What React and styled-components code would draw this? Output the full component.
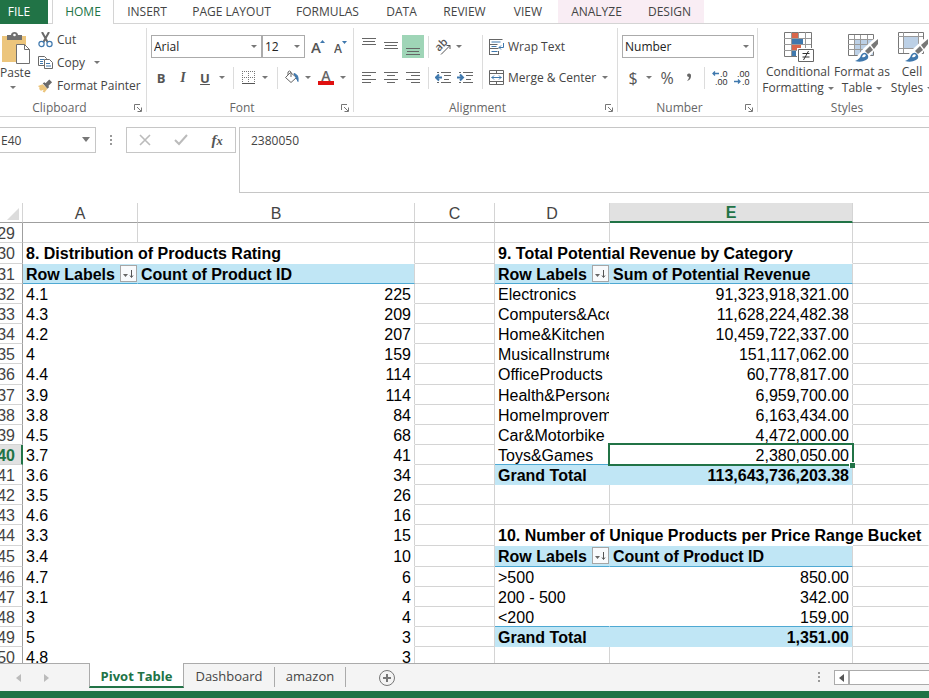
import React from "react";
import styled, { createGlobalStyle, css } from "styled-components";

const GREEN = "#217346";
const LINE = "#d4d4d4";
const BLUE = "#3f78ad";
const GREY = "#666666";
const UI = '"Open Sans", "Noto Sans", sans-serif';
const SHEET = '"Liberation Sans", Arial, sans-serif';

const Global = createGlobalStyle`
  *, *::before, *::after { box-sizing: border-box; }
  body { margin: 0; background: #fff; color: #444; font: 12px/16px ${UI}; overflow: hidden; }
  button, input, select, textarea { font: inherit; color: inherit; margin: 0; border-radius: 0; }
  button { padding: 0; border: 0; background: none; white-space: nowrap; }
  svg { display: block; flex: none; }
`;

const Page = styled.div`
  display: flex;
  flex-direction: column;
  height: 100vh;
  overflow: hidden;
`;

/* Ribbon tabs */
const TabBar = styled.nav`
  display: flex;
  height: 24px;
  flex: none;
  &::after { content: ""; flex: 1; border-bottom: 1px solid ${LINE}; }
`;
const FileTab = styled.button`
  width: 48px;
  padding: 0 10px 0 0;
  background: ${GREEN};
  color: #fff;
`;
const TabGap = styled.span`
  width: 4px;
  border-bottom: 1px solid ${LINE};
`;
const Tab = styled.button`
  flex: none;
  width: ${(p) => p.$w}px;
  border-bottom: 1px solid ${LINE};
  background: ${(p) => (p.$context ? "#f9edf4" : "#fff")};
  ${(p) => p.$active && css`
    color: ${GREEN};
    border: solid ${LINE};
    border-width: 0 1px;
  `}
`;

/* Ribbon */
const RibbonBar = styled.div`
  display: flex;
  flex: none;
  height: 93px;
  padding: 4px 0;
  border-bottom: 1px solid ${LINE};
  overflow: hidden;
`;
const Group = styled.section`
  display: flex;
  flex-direction: column;
  flex: none;
  width: ${(p) => p.$w}px;
  border-right: 1px solid #dcdcdc;
  &:first-child { margin-left: -11px; }
`;
const GroupBody = styled.div`
  display: flex;
  flex: none;
  height: 72px;
  padding: ${(p) => p.$pad};
`;
const GroupFoot = styled.footer`
  display: grid;
  grid-template-columns: 1fr 16px;
  align-items: center;
  flex: none;
  height: 16px;
  margin-bottom: -4px;
  text-align: center;
  color: #666;
`;
const LauncherButton = styled.button`
  display: flex;
  justify-content: center;
`;
const Stack = styled.div`
  display: flex;
  flex-direction: column;
  gap: ${(p) => p.$gap ?? 8}px;
  flex: ${(p) => (p.$grow ? 1 : "none")};
`;
const Row = styled.div`
  display: flex;
  align-items: center;
  height: 23px;
`;
const FontPickers = styled(Row)`padding-left: 1px;`;
const IconButton = styled.button`
  display: flex;
  align-items: center;
  justify-content: center;
  flex: none;
  width: ${(p) => p.$w || 22}px;
  height: 23px;
  background: ${(p) => (p.$on ? "#9fd5b7" : "transparent")};
`;
const LabelButton = styled.button`
  display: flex;
  align-items: center;
  gap: 4px;
  height: 23px;
`;
const PasteButton = styled.button`
  display: flex;
  flex-direction: column;
  align-items: flex-start;
  justify-content: flex-start;
  width: 38px;
  padding-top: 3px;
  & > span { padding-top: 1px; }
  & > svg:last-child { margin: 5px 0 0 10px; }
`;
const StyleButton = styled.button`
  display: flex;
  flex-direction: column;
  align-items: center;
  flex: none;
  width: ${(p) => p.$w}px;
  & > svg { margin-bottom: 2px; }
`;
const StyleLine = styled.span`
  display: flex;
  align-items: center;
  gap: 4px;
`;
const Divider = styled.span`
  display: flex;
  justify-content: center;
  flex: none;
  width: ${(p) => p.$w || 10}px;
  height: ${(p) => p.$h || 22}px;
  &::before { content: ""; width: 1px; background: #dcdcdc; }
`;
const Pick = styled.label`
  position: relative;
  flex: ${(p) => (p.$w ? "none" : 1)};
  width: ${(p) => (p.$w ? p.$w + "px" : "auto")};
  height: 23px;
  & > select {
    appearance: none;
    width: 100%;
    height: 100%;
    padding: 0 14px 0 2px;
    border: 1px solid #ababab;
    background: #fff;
    color: #222;
  }
  & > svg { position: absolute; right: 5px; top: 10px; pointer-events: none; }
`;
const Glyph = styled.span`
  font: ${(p) => p.$font || `bold 13px/16px ${UI}`};
  color: #555;
  text-decoration: ${(p) => (p.$under ? "underline" : "none")};
`;

/* Formula bar */
const FormulaBar = styled.div`
  display: flex;
  align-items: flex-start;
  flex: none;
  height: 86px;
  padding-top: 10px;
`;
const NameBox = styled.label`
  position: relative;
  width: 96px;
  height: 26px;
  & > input {
    width: 100%;
    height: 100%;
    padding: 0 20px 0 1px;
    border: 1px solid #c6c6c6;
    border-left: 0;
  }
  & > svg { position: absolute; right: 6px; top: 10px; }
`;
const Dots = styled.span`
  display: flex;
  align-items: center;
  justify-content: center;
  width: 30px;
  height: 26px;
`;
const EntryTools = styled.div`
  display: flex;
  justify-content: space-around;
  align-items: center;
  width: 110px;
  height: 26px;
  margin-right: 3px;
  border: 1px solid #c6c6c6;
`;
const FormulaInput = styled.textarea`
  flex: 1;
  height: 66px;
  padding: 5px 11px;
  border: 1px solid #c6c6c6;
  border-right: 0;
  resize: none;
`;

/* Sheet */
const SheetArea = styled.main`
  flex: 1;
  min-height: 0;
  overflow: hidden;
`;
const Grid = styled.table`
  width: 100%;
  table-layout: fixed;
  border-collapse: separate;
  border-spacing: 0;
  font: 16px/16px ${SHEET};
  color: #000;
`;
const Col = styled.col`width: ${(p) => (p.$w ? p.$w + "px" : "auto")};`;
const ColHead = styled.th`
  height: 20px;
  padding: 2px 0 0;
  font-weight: ${(p) => (p.$on ? "bold" : "normal")};
  color: ${(p) => (p.$on ? GREEN : "#444")};
  background: ${(p) => (p.$on ? "#e1e1e1" : "#fff")};
  border-right: 1px solid ${LINE};
  border-bottom: ${(p) => (p.$on ? `2px solid ${GREEN}` : "1px solid #9f9f9f")};
  &:last-child { border-right: 0; }
  & > svg { margin-left: 7px; }
`;
const RowHead = styled.th`
  height: ${(p) => p.$h}px;
  padding: 3px 0 0;
  overflow: hidden;
  vertical-align: top;
  font-weight: ${(p) => (p.$on ? "bold" : "normal")};
  color: ${(p) => (p.$on ? GREEN : "#444")};
  background: ${(p) => (p.$on ? "#e1e1e1" : "#fff")};
  border-right: ${(p) => (p.$on ? `2px solid ${GREEN}` : "1px solid #9f9f9f")};
  border-bottom: 1px solid ${LINE};
`;
const RowNumber = styled.span`
  display: flex;
  justify-content: flex-end;
  padding-right: ${(p) => (p.$on ? 6 : 7)}px;
`;
const Cell = styled.td`
  padding: 3px 3px 0;
  vertical-align: top;
  white-space: nowrap;
  text-align: ${(p) => (p.$right ? "right" : "left")};
  overflow: ${(p) => (p.$clip ? "hidden" : "visible")};
  font-weight: ${(p) => (p.$bold ? "bold" : "normal")};
  background: ${(p) => (p.$fill ? "#c0e6f5" : "transparent")};
  border-right: 1px solid ${(p) => p.$v || "transparent"};
  border-bottom: 1px solid ${(p) => p.$b || "transparent"};
  ${(p) => p.$selected && css`
    position: relative;
    &::before {
      content: "";
      position: absolute;
      inset: -2px;
      border: 2px solid ${GREEN};
    }
    &::after {
      content: "";
      position: absolute;
      right: -3px;
      bottom: -4px;
      width: 6px;
      height: 6px;
      background: ${GREEN};
      border: solid #fff;
      border-width: 1px 0 0 1px;
    }
  `}
`;
const HeadCell = styled.div`
  display: flex;
  align-items: center;
  justify-content: space-between;
  height: 16px;
`;
const FilterButton = styled.button`
  display: flex;
  align-items: center;
  justify-content: center;
  width: 17px;
  height: 17px;
  margin: -3px -3px 0 0;
  border: 1px solid #a6a6a6;
  background: #f8fafc;
`;

/* Bottom bars */
const SheetTabs = styled.nav`
  display: flex;
  flex: none;
  height: 28px;
  background: #f4f4f4;
  border-top: 1px solid #ababab;
`;
const TabScroll = styled.div`
  display: flex;
  align-items: center;
  width: 89px;
  padding-left: 7px;
  gap: 6px;
`;
const SheetTab = styled.button`
  width: ${(p) => p.$w}px;
  height: 20px;
  margin-top: 3px;
  padding-bottom: 2px;
  font-size: 13px;
  border-right: 1px solid #ababab;
  ${(p) => p.$active && css`
    height: 25px;
    margin-top: -1px;
    padding: 3px 0 0;
    background: #fff;
    color: ${GREEN};
    font-weight: bold;
    border: solid #ababab;
    border-width: 0 1px;
    border-bottom: 2px solid ${GREEN};
  `}
`;
const AddSheet = styled.button`
  width: 20px;
  margin: 0 auto 0 32px;
`;
const ScrollBar = styled.div`
  display: flex;
  width: 95px;
  height: 15px;
  margin-top: 6px;
  border: 1px solid #ababab;
  border-right: 0;
  background: #fff;
`;
const ScrollArrow = styled.button`
  display: flex;
  align-items: center;
  justify-content: center;
  width: 15px;
  border-right: 2px solid #ababab;
`;
const Status = styled.footer`
  flex: none;
  height: 7px;
  background: ${GREEN};
`;

/* Icons */
const Caret = ({ s = 6, c = "#777" }) => (
  <svg width={s} height={s === 6 ? 3 : 5} viewBox="0 0 6 3" preserveAspectRatio="none"><path d="M0 0h6L3 3z" fill={c} /></svg>
);
const DropCaret = ({ w = 12, label }) => <IconButton $w={w} aria-label={label}><Caret /></IconButton>;
const Launcher = () => (
  <svg width="8" height="8" viewBox="0 0 8 8" fill="none" stroke="#777"><path d="M.5 6V.5H6M3 3l4 4M7.500 3.500v4h-4" /></svg>
);
const PasteIcon = () => (
  <svg width="31" height="33" viewBox="0 0 31 33">
    <path d="M2 5h24v26H2z" fill="#ecc57c" />
    <path d="M7 4h4c0-4 7-4 7 0h4v5H7z" fill="#6f6f6f" />
    <circle cx="14.500" cy="4" r="1.300" fill="#fff" />
    <path d="M16.500 13.500h8l5 5v14h-13z" fill="#fff" stroke="#6f6f6f" />
    <path d="M24.500 13.500v5h5" fill="none" stroke="#6f6f6f" />
  </svg>
);
const CutIcon = () => (
  <svg width="15" height="16" viewBox="0 0 15 16" fill="none">
    <path d="M4 0l5.500 10M11 0L5.500 10" stroke="#6a6a6a" strokeWidth="2" />
    <circle cx="3.500" cy="12" r="2.600" stroke={BLUE} strokeWidth="1.200" />
    <circle cx="11.500" cy="12" r="2.600" stroke={BLUE} strokeWidth="1.200" />
  </svg>
);
const CopyIcon = () => (
  <svg width="15" height="15" viewBox="0 0 15 15" fill="#fff" stroke="#6a6a6a">
    <path d="M.5 1.500h6l2 2v7h-8z" />
    <path d="M2 4.500h4M2 6.500h3M2 8.500h3" stroke={BLUE} />
    <path d="M6.500 4.500h5l3 3v6h-8z" />
    <path d="M8 8.500h4M8 11h5" stroke={BLUE} />
  </svg>
);
const PainterIcon = () => (
  <svg width="15" height="14" viewBox="0 0 16 14">
    <path d="M0 7l5-2 5 5-3 4-2-1 1-2-3 1-2-2 1-1z" fill="#ecc57c" />
    <path d="M5 4l2-1 5 5-2 2zM8 4l4-4 3 3-4 4z" fill="#6a6a6a" />
  </svg>
);
const BorderIcon = () => (
  <svg width="13" height="13" viewBox="0 0 13 13" fill="none" stroke="#777" strokeDasharray="1 1">
    <path d="M0 .5h13M0 6.500h13M.5 0v13M6.500 0v13M12.500 0v13" />
    <path d="M0 12.500h13" strokeDasharray="none" stroke="#555" />
  </svg>
);
const BucketIcon = () => (
  <svg width="16" height="15" viewBox="0 0 16 15" fill="none" stroke="#666">
    <path d="M1.500 7.500l5-5 6 5-5.500 5z" />
    <path d="M4 5V2q1.500-2 3 0v5" />
    <path d="M10 3.500q5 1 4 8l-2-4z" fill={BLUE} stroke={BLUE} />
  </svg>
);
const FontColorIcon = () => (
  <svg width="16" height="15" viewBox="0 0 16 15">
    <text x="8" y="11" textAnchor="middle" fontFamily="Open Sans, sans-serif" fontWeight="600" fontSize="14" fill="#666">A</text>
    <path d="M0 11h16v4H0z" fill="#e01010" />
  </svg>
);
const SizeIcon = ({ down }) => (
  <svg width="14" height="16" viewBox="0 0 14 16" fontFamily="Open Sans, sans-serif" fontWeight="600" fill="#555">
    <text x="0" y="14" fontSize={down ? 12 : 15}>A</text>
    <path d={down ? "M8 2h5l-2.500 3z" : "M9 4h5l-2.500-3z"} fill={BLUE} />
  </svg>
);
const LinesIcon = ({ lines, h = 11 }) => (
  <svg width="14" height={h} viewBox={`0 0 14 ${h}`} stroke="#666">
    {lines.map(([x1, x2, y]) => <path key={y} d={`M${x1} ${y + 0.5}H${x2}`} />)}
  </svg>
);
const OrientIcon = () => (
  <svg width="18" height="18" viewBox="0 0 18 18" fill="none" stroke="#555">
    <text x="0" y="0" transform="translate(5 14) rotate(-45)" fontFamily="Open Sans, sans-serif" fontWeight="600" fontSize="11" fill="#555" stroke="none">ab</text>
    <path d="M7 16.500L16 7.500M16 7.500h-3.500M16 7.500v3.500" />
  </svg>
);
const IndentIcon = ({ flip }) => (
  <svg width="16" height="11" viewBox="0 0 16 11" fill="none" stroke="#666">
    <path d="M2 .5h2M6 .5h10M9 3.500h7M9 7.500h5M2 10.500h2M6 10.500h10" />
    <path d={flip ? "M0 5.500h6M3 2.500l3 3-3 3" : "M7 5.500H1M4 2.500l-3 3 3 3"} stroke={BLUE} strokeWidth="2" />
  </svg>
);
const WrapIcon = () => (
  <svg width="15" height="16" viewBox="0 0 15 16" fill="none" stroke="#666">
    <path d="M.5.5h13M.5 5.500h8M.5 9.500h9M.5 15.500h9M.5 0v16M9.500 12v4" />
    <path d="M2.500 3h9M2.500 7.500h5M2.500 12.500h6M14.500 4v4.500H10M12 6.500l-2 2 2 2" stroke={BLUE} />
  </svg>
);
const MergeIcon = () => (
  <svg width="15" height="15" viewBox="0 0 15 15" fill="none" stroke="#666">
    <path d="M.5.5h14v14H.5zM.5 3.500h14M.5 11.500h14M7.500 0v3.500M7.500 11.500V15" />
    <path d="M2.500 7.500h10M5 5.500l-2 2 2 2M10 5.500l2 2-2 2" stroke={BLUE} />
  </svg>
);
const DecimalIcon = ({ less }) => (
  <svg width="16" height="16" viewBox="0 0 16 16" fontFamily="Liberation Sans, sans-serif" fontSize="9" fill="#333">
    <text x={less ? 3 : 8} y="7">{less ? ".00" : ".0"}</text>
    <text x={less ? 8 : 3} y="15">{less ? ".0" : ".00"}</text>
    <path d={less ? "M0 11.500h6M4 9.500l2 2-2 2" : "M7 3.500H1M3 1.500l-2 2 2 2"} fill="none" stroke={BLUE} strokeWidth="1.300" />
  </svg>
);
const ConditionalIcon = () => (
  <svg width="31" height="31" viewBox="0 0 31 31" fill="none">
    <path d="M1.500 1.500h27v24h-27z" fill="#fff" stroke="#777" />
    <path d="M1 7.500h27M1 13.500h27M1 19.500h27M8.500 1v24M15.500 1v24M22.500 1v24" stroke="#999" />
    <path d="M9 2h6v5H9zM9 14h9v5H9z" fill="#d9664a" />
    <path d="M9 8h11v5H9zM9 20h4v5H9z" fill={BLUE} />
    <path d="M14 17h17v14H14z" fill="#fff" />
    <path d="M15.500 18.500h15v12h-15z" fill="#fff" stroke="#666" />
    <path d="M19.500 22.500h7M19.500 26h7M25.500 20l-5 9" stroke="#333" />
  </svg>
);
const BrushIcon = ({ cell }) => (
  <svg width="31" height="31" viewBox="0 0 31 31" fill="none">
    <path d={cell ? "M1.500 1.500h25v21h-25z" : "M1.500 3.500h25v21h-25z"} fill="#fff" stroke="#777" />
    {cell
      ? <path d="M7 6h14v11H7z" fill="#bcd0e6" />
      : <path d="M8 9h18v15H8z" fill="#bcd0e6" />}
    <path d={cell ? "M1 5.500h25M1 17.500h25M6.500 1v21M21.500 1v21" : "M1 8.500h25M1 13.500h25M1 18.500h25M7.500 4v20M13.500 4v20M20.500 4v20"} stroke="#999" />
    <path d="M6 30L17 17 30 5v11L19 30z" fill="#fff" />
    <path d="M24 14l7-6v5l-4 5z" fill="#777" />
    <path d="M18 20l5-5 3 4-5 4z" fill="#777" />
    <path d="M8 30q5-2 6-6 3-4 6-1 3 4-1 6-5 3-11 1z" fill={BLUE} />
    <path d="M15 26q1-4 4-2-1 3-4 2" fill="#fff" />
  </svg>
);
const SortIcon = () => (
  <svg width="11" height="10" viewBox="0 0 11 10"><path d="M0 5h5L2.500 8z" fill="#666" /><path d="M8.500 1v7M7 6.500l1.500 2 1.500-2" fill="none" stroke="#555" /></svg>
);
const DotsIcon = () => (
  <svg width="2" height="12" viewBox="0 0 2 12" fill="#999"><path d="M0 1h2v2H0zM0 5h2v2H0zM0 9h2v2H0z" /></svg>
);
const ArrowIcon = ({ right, c = "#bbb" }) => (
  <svg width="5" height="8" viewBox="0 0 5 8"><path d={right ? "M0 0l5 4-5 4z" : "M5 0L0 4l5 4z"} fill={c} /></svg>
);

const vertical = (y) => [[0, 14, y], [1, 13, y + 3], [0, 14, y + 6]];
const horizontal = (x1, x2) => [[0, 14, 0], [x1, x2, 3], [0, 14, 7], [x1, x2, 10]];

const tabs = [
  ["HOME", 62, "active"], ["INSERT", 66], ["PAGE LAYOUT", 103], ["FORMULAS", 89], ["DATA", 59],
  ["REVIEW", 67], ["VIEW", 60], ["ANALYZE", 77, "context"], ["DESIGN", 69, "context"],
];

const RibbonGroup = ({ name, w, pad, launcher = true, children }) => (
  <Group $w={w} aria-label={name}>
    <GroupBody $pad={pad}>{children}</GroupBody>
    <GroupFoot>
      <span>{name}</span>
      {launcher && <LauncherButton aria-label={`${name} settings`}><Launcher /></LauncherButton>}
    </GroupFoot>
  </Group>
);

const Select = ({ label, value, w }) => (
  <Pick $w={w}>
    <select aria-label={label} defaultValue={value}><option>{value}</option></select>
    <Caret />
  </Pick>
);

function Ribbon() {
  return (
    <RibbonBar>
      <RibbonGroup name="Clipboard" w={158} pad="0 0 0 11px">
        <PasteButton><PasteIcon /><span>Paste</span><Caret /></PasteButton>
        <Stack $gap={0}>
          <LabelButton><CutIcon />Cut</LabelButton>
          <Row><LabelButton><CopyIcon />Copy</LabelButton><DropCaret w={24} label="Copy options" /></Row>
          <LabelButton><PainterIcon />Format Painter</LabelButton>
        </Stack>
      </RibbonGroup>
      <RibbonGroup name="Font" w={207} pad="7px 4px 0 3px">
        <Stack>
          <FontPickers>
            <Select label="Font family" value="Arial" w={111} />
            <Select label="Font size" value="12" w={43} />
            <IconButton $w={26} aria-label="Increase font size"><SizeIcon /></IconButton>
            <IconButton $w={20} aria-label="Decrease font size"><SizeIcon down /></IconButton>
          </FontPickers>
          <Row>
            <IconButton aria-label="Bold"><Glyph>B</Glyph></IconButton>
            <IconButton aria-label="Italic"><Glyph $font='italic bold 14px/16px "Liberation Serif", serif'>I</Glyph></IconButton>
            <IconButton aria-label="Underline"><Glyph $under>U</Glyph></IconButton>
            <DropCaret label="Underline options" />
            <Divider />
            <IconButton $w={20} aria-label="Borders"><BorderIcon /></IconButton>
            <DropCaret w={14} label="Border options" />
            <Divider />
            <IconButton $w={20} aria-label="Fill color"><BucketIcon /></IconButton>
            <DropCaret label="Fill options" />
            <IconButton $w={24} aria-label="Font color"><FontColorIcon /></IconButton>
            <DropCaret w={10} label="Font color options" />
          </Row>
        </Stack>
      </RibbonGroup>
      <RibbonGroup name="Alignment" w={264} pad="7px 4px 0 4px">
        <Stack>
          <Row>
            <IconButton aria-label="Top align"><LinesIcon lines={vertical(0)} h={17} /></IconButton>
            <IconButton aria-label="Middle align"><LinesIcon lines={vertical(4)} h={17} /></IconButton>
            <IconButton $on aria-label="Bottom align"><LinesIcon lines={vertical(10)} h={17} /></IconButton>
            <Divider $w={8} />
            <IconButton aria-label="Orientation"><OrientIcon /></IconButton>
            <DropCaret w={10} label="Orientation options" />
          </Row>
          <Row>
            <IconButton aria-label="Align left"><LinesIcon lines={horizontal(0, 9)} /></IconButton>
            <IconButton aria-label="Center"><LinesIcon lines={horizontal(3, 11)} /></IconButton>
            <IconButton aria-label="Align right"><LinesIcon lines={horizontal(5, 14)} /></IconButton>
            <Divider $w={8} />
            <IconButton aria-label="Decrease indent"><IndentIcon /></IconButton>
            <IconButton aria-label="Increase indent"><IndentIcon flip /></IconButton>
          </Row>
        </Stack>
        <Divider $w={13} $h={54} />
        <Stack $grow>
          <Row><LabelButton><WrapIcon />Wrap Text</LabelButton></Row>
          <Row><LabelButton><MergeIcon />Merge &amp; Center</LabelButton><DropCaret w={18} label="Merge options" /></Row>
        </Stack>
      </RibbonGroup>
      <RibbonGroup name="Number" w={140} pad="7px 3px 0 4px">
        <Stack $grow>
          <Row><Select label="Number format" value="Number" /></Row>
          <Row>
            <IconButton aria-label="Accounting"><Glyph $font={`16px/20px ${UI}`}>$</Glyph></IconButton>
            <DropCaret w={10} label="Accounting options" />
            <IconButton $w={26} aria-label="Percent"><Glyph $font={`16px/20px ${UI}`}>%</Glyph></IconButton>
            <IconButton $w={18} aria-label="Comma">
              <svg width="6" height="9" viewBox="0 0 6 9"><path d="M1 2a2 2 0 1 1 4 1q0 4-4 5 2-2 2-4-2 0-2-2" fill={GREY} /></svg>
            </IconButton>
            <Divider $w={12} />
            <IconButton $w={20} aria-label="Increase decimal"><DecimalIcon /></IconButton>
            <IconButton $w={24} aria-label="Decrease decimal"><DecimalIcon less /></IconButton>
          </Row>
        </Stack>
      </RibbonGroup>
      <RibbonGroup name="Styles" w={195} pad="3px 0 0 4px" launcher={false}>
        <StyleButton $w={72}><ConditionalIcon /><StyleLine>Conditional</StyleLine><StyleLine>Formatting <Caret /></StyleLine></StyleButton>
        <StyleButton $w={56}><BrushIcon /><StyleLine>Format as</StyleLine><StyleLine>Table <Caret /></StyleLine></StyleButton>
        <StyleButton $w={44}><BrushIcon cell /><StyleLine>Cell</StyleLine><StyleLine>Styles <Caret /></StyleLine></StyleButton>
      </RibbonGroup>
    </RibbonBar>
  );
}

const ratings = [
  ["4.1", 225], ["4.3", 209], ["4.2", 207], ["4", 159], ["4.4", 114], ["3.9", 114], ["3.8", 84],
  ["4.5", 68], ["3.7", 41], ["3.6", 34], ["3.5", 26], ["4.6", 16], ["3.3", 15], ["3.4", 10],
  ["4.7", 6], ["3.1", 4], ["3", 4], ["5", 3], ["4.8", 3],
];
const left = [
  { kind: "blank" },
  { kind: "title", v: ["8. Distribution of Products Rating"] },
  { kind: "head", v: ["Row Labels", "Count of Product ID"] },
  ...ratings.map((v) => ({ kind: "data", v })),
];
const right = [
  { kind: "blank" },
  { kind: "title", v: ["9. Total Potential Revenue by Category"] },
  { kind: "head", v: ["Row Labels", "Sum of Potential Revenue"] },
  ...[
    ["Electronics", "91,323,918,321.00"],
    ["Computers&Accessories", "11,628,224,482.38"],
    ["Home&Kitchen", "10,459,722,337.00"],
    ["MusicalInstruments", "151,117,062.00"],
    ["OfficeProducts", "60,778,817.00"],
    ["Health&PersonalCare", "6,959,700.00"],
    ["HomeImprovement", "6,163,434.00"],
    ["Car&Motorbike", "4,472,000.00"],
  ].map((v) => ({ kind: "data", v })),
  { kind: "data", v: ["Toys&Games", "2,380,050.00"], last: true, selected: true },
  { kind: "total", v: ["Grand Total", "113,643,736,203.38"] },
  { kind: "blank" },
  { kind: "blank" },
  { kind: "title", v: ["10. Number of Unique Products per Price Range Bucket"], wide: true },
  { kind: "head", v: ["Row Labels", "Count of Product ID"] },
  { kind: "data", v: [">500", "850.00"] },
  { kind: "data", v: ["200 - 500", "342.00"] },
  { kind: "data", v: ["<200", "159.00"], last: true },
  { kind: "total", v: ["Grand Total", "1,351.00"] },
  { kind: "blank" },
];
const tallRows = [30, 36, 44, 45];

function Pair({ kind, v = [], last, selected, wide }) {
  const head = kind === "head";
  const fill = head || kind === "total";
  const bold = fill || kind === "title";
  const blank = kind === "blank";
  const bottom = head || last ? "#4fa9d3" : blank ? LINE : fill ? "#c0e6f5" : undefined;
  return (
    <>
      <Cell $fill={fill} $bold={bold} $clip={kind === "data"} $b={bottom} $v={blank ? LINE : fill ? "#c0e6f5" : undefined}>
        {head
          ? <HeadCell>{v[0]}<FilterButton aria-label="Sort and filter"><SortIcon /></FilterButton></HeadCell>
          : v[0]}
      </Cell>
      <Cell $fill={fill} $bold={bold} $right={!head} $b={bottom} $v={wide ? undefined : LINE} $selected={selected}>{v[1]}</Cell>
    </>
  );
}

function Sheet() {
  return (
    <SheetArea>
      <Grid>
        <colgroup>{[23, 115, 277, 80, 115, 243, 0].map((w, i) => <Col key={i} $w={w} />)}</colgroup>
        <thead>
          <tr>
            <ColHead aria-label="Select all"><svg width="12" height="12" viewBox="0 0 12 12"><path d="M12 0v12H0z" fill="#dcdcdc" /></svg></ColHead>
            {["A", "B", "C", "D", "E", ""].map((c, i) => <ColHead key={i} $on={c === "E"}>{c}</ColHead>)}
          </tr>
        </thead>
        <tbody>
          {left.map((l, i) => {
            const n = 29 + i;
            const on = n === 40;
            return (
              <tr key={n}>
                <RowHead scope="row" $on={on} $h={tallRows.includes(n) ? 21 : 20}><RowNumber $on={on}>{n}</RowNumber></RowHead>
                <Pair {...l} />
                <Cell $v={LINE} $b={LINE} />
                <Pair {...right[i]} />
                <Cell $b={LINE} />
              </tr>
            );
          })}
        </tbody>
      </Grid>
    </SheetArea>
  );
}

export default function App() {
  return (
    <Page>
      <Global />
      <TabBar>
        <FileTab>FILE</FileTab>
        <TabGap />
        {tabs.map(([name, w, mode]) => (
          <Tab key={name} $w={w} $active={mode === "active"} $context={mode === "context"}>{name}</Tab>
        ))}
      </TabBar>
      <Ribbon />
      <FormulaBar>
        <NameBox><input aria-label="Name box" defaultValue="E40" /><Caret s={8} /></NameBox>
        <Dots><DotsIcon /></Dots>
        <EntryTools>
          <IconButton aria-label="Cancel"><svg width="12" height="12" viewBox="0 0 12 12"><path d="M1 1l10 10M11 1L1 11" stroke="#bbb" strokeWidth="1.600" /></svg></IconButton>
          <IconButton aria-label="Enter"><svg width="14" height="12" viewBox="0 0 14 12"><path d="M1 6l4 4 8-9" fill="none" stroke="#bbb" strokeWidth="2" /></svg></IconButton>
          <IconButton aria-label="Insert function"><Glyph $font='italic bold 15px/18px "Liberation Serif", serif'>f<small>x</small></Glyph></IconButton>
        </EntryTools>
        <FormulaInput aria-label="Formula" defaultValue="2380050" />
      </FormulaBar>
      <Sheet />
      <SheetTabs>
        <TabScroll>
          <IconButton aria-label="Previous sheets"><ArrowIcon /></IconButton>
          <IconButton aria-label="Next sheets"><ArrowIcon right /></IconButton>
        </TabScroll>
        <SheetTab $w={95} $active>Pivot Table</SheetTab>
        <SheetTab $w={91}>Dashboard</SheetTab>
        <SheetTab $w={71}>amazon</SheetTab>
        <AddSheet aria-label="New sheet">
          <svg width="18" height="18" viewBox="0 0 18 18" fill="none" stroke="#777"><circle cx="9" cy="9" r="7.500" /><path d="M5 9h8M9 5v8" strokeWidth="2" /></svg>
        </AddSheet>
        <Dots><DotsIcon /></Dots>
        <ScrollBar><ScrollArrow aria-label="Scroll left"><ArrowIcon c="#555" /></ScrollArrow></ScrollBar>
      </SheetTabs>
      <Status />
    </Page>
  );
}
